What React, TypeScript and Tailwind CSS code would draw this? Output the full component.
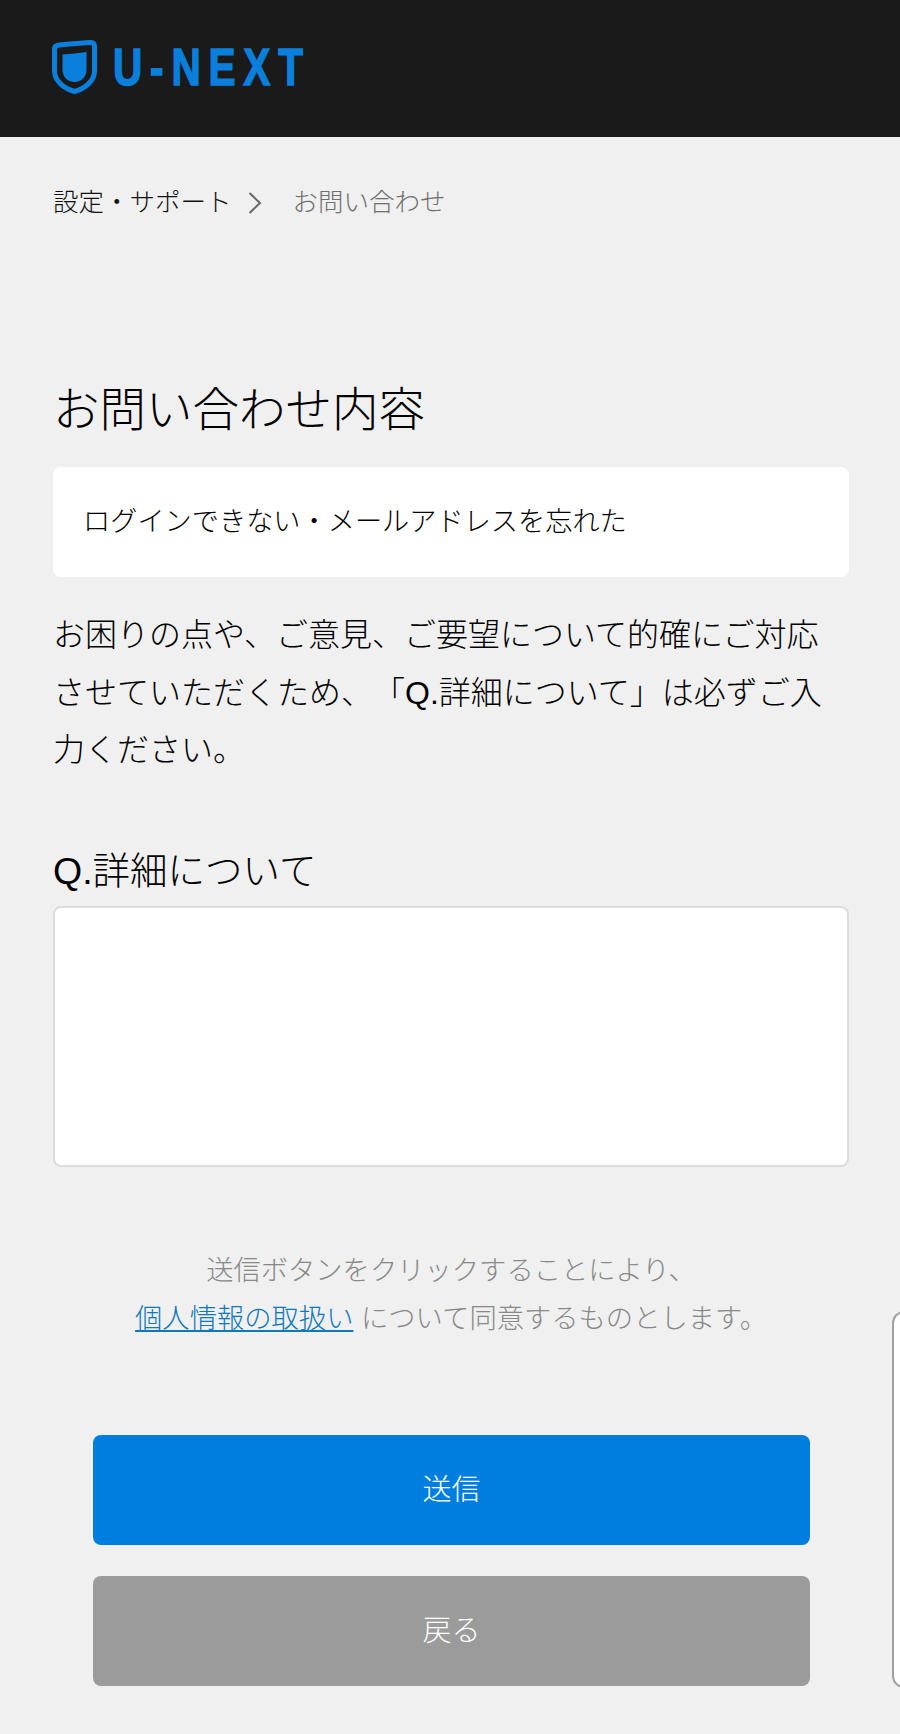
import React from "react";

const Logo = () => (
  <div className="flex items-center gap-[16px]">
    <svg width="45" height="54" viewBox="0 0 45 54" fill="none">
      <path d="M2.5 9 C2.5 6.5 4 5.5 6 5.2 C16 4 27 3.4 38 2.5 C41 2.3 42.5 3.5 42.5 6 V31 C42.5 41 33 48.5 22.5 51.5 C12 48.5 2.5 41 2.5 31 Z" stroke="#0a7fdc" strokeWidth="5" strokeLinejoin="round" />
      <path d="M10.5 14.5 C18 14 27 13 34.5 12 V29.5 C34.5 37 29.5 42 22.5 42 C15.5 42 10.5 37 10.5 29.5 Z" fill="#0a7fdc" />
    </svg>
    <span className="inline-block origin-left scale-x-[0.78] font-['Liberation_Sans',sans-serif] font-bold text-[52px] leading-none tracking-[10px] text-[#0a7fdc] [-webkit-text-stroke:1.5px_#0a7fdc]">U-NEXT</span>
  </div>
);

export default function App() {
  return (
    <div className="relative min-h-[1734px] overflow-hidden bg-[#f0f0f0] text-[#111] font-['Liberation_Sans','Noto_Sans_CJK_JP',sans-serif] font-light [text-spacing-trim:space-all]">
      <header className="flex h-[137px] items-center bg-[#1a1a1a] px-[52px] pb-[3px]">
        <Logo />
      </header>

      <main className="pl-[53px] pr-[51px]">
        <nav className="flex h-[131px] items-center text-[25.5px] leading-none">
          <span>設定・サポート</span>
          <svg className="ml-[16px] mr-[31px]" width="14" height="24" viewBox="0 0 14 24" fill="none">
            <path d="M1.5 2 L12 12 L1.5 22" stroke="#666" strokeWidth="2" />
          </svg>
          <span className="text-[#6f6f6f]">お問い合わせ</span>
        </nav>

        <h1 className="mt-[108px] text-[46.5px] font-light leading-[68px] text-black">お問い合わせ内容</h1>

        <div className="mt-[23px] flex h-[110px] items-center rounded-lg bg-white px-[30px] text-[27.2px] text-black">
          ログインできない・メールアドレスを忘れた
        </div>

        <p className="mt-[30px] text-[32px] leading-[57.5px] text-black">
          お困りの点や、ご意見、ご要望について的確にご対応<br />
          させていただくため、「Q.詳細について」は必ずご入<br />
          力ください。
        </p>

        <label className="mt-[64px] block text-[37.5px] leading-[54px] text-black">Q.詳細について</label>
        <div className="mt-[8px] h-[261px] rounded-lg border-2 border-[#dcdcdc] bg-white" />

        <p className="mt-[80px] text-center text-[27.3px] leading-[48px] text-[#888]">
          送信ボタンをクリックすることにより、<br />
          <a className="text-[#0f78b8] underline">個人情報の取扱い</a> について同意するものとします。
        </p>

        <div className="mt-[92px] flex flex-col gap-[31px] pl-[40px] pr-[39px]">
          <button className="h-[110px] rounded-lg bg-[#007edf] pt-[2px] text-[29px] text-white">送信</button>
          <button className="h-[110px] rounded-lg bg-[#9b9b9b] pt-[2px] text-[29px] text-white">戻る</button>
        </div>
      </main>

      {/* 右端にはみ出したパネル */}
      <div className="absolute left-[892px] top-[1311px] h-[377px] w-[30px] rounded-xl border-2 border-[#a0a0a0] bg-white" />
    </div>
  );
}
